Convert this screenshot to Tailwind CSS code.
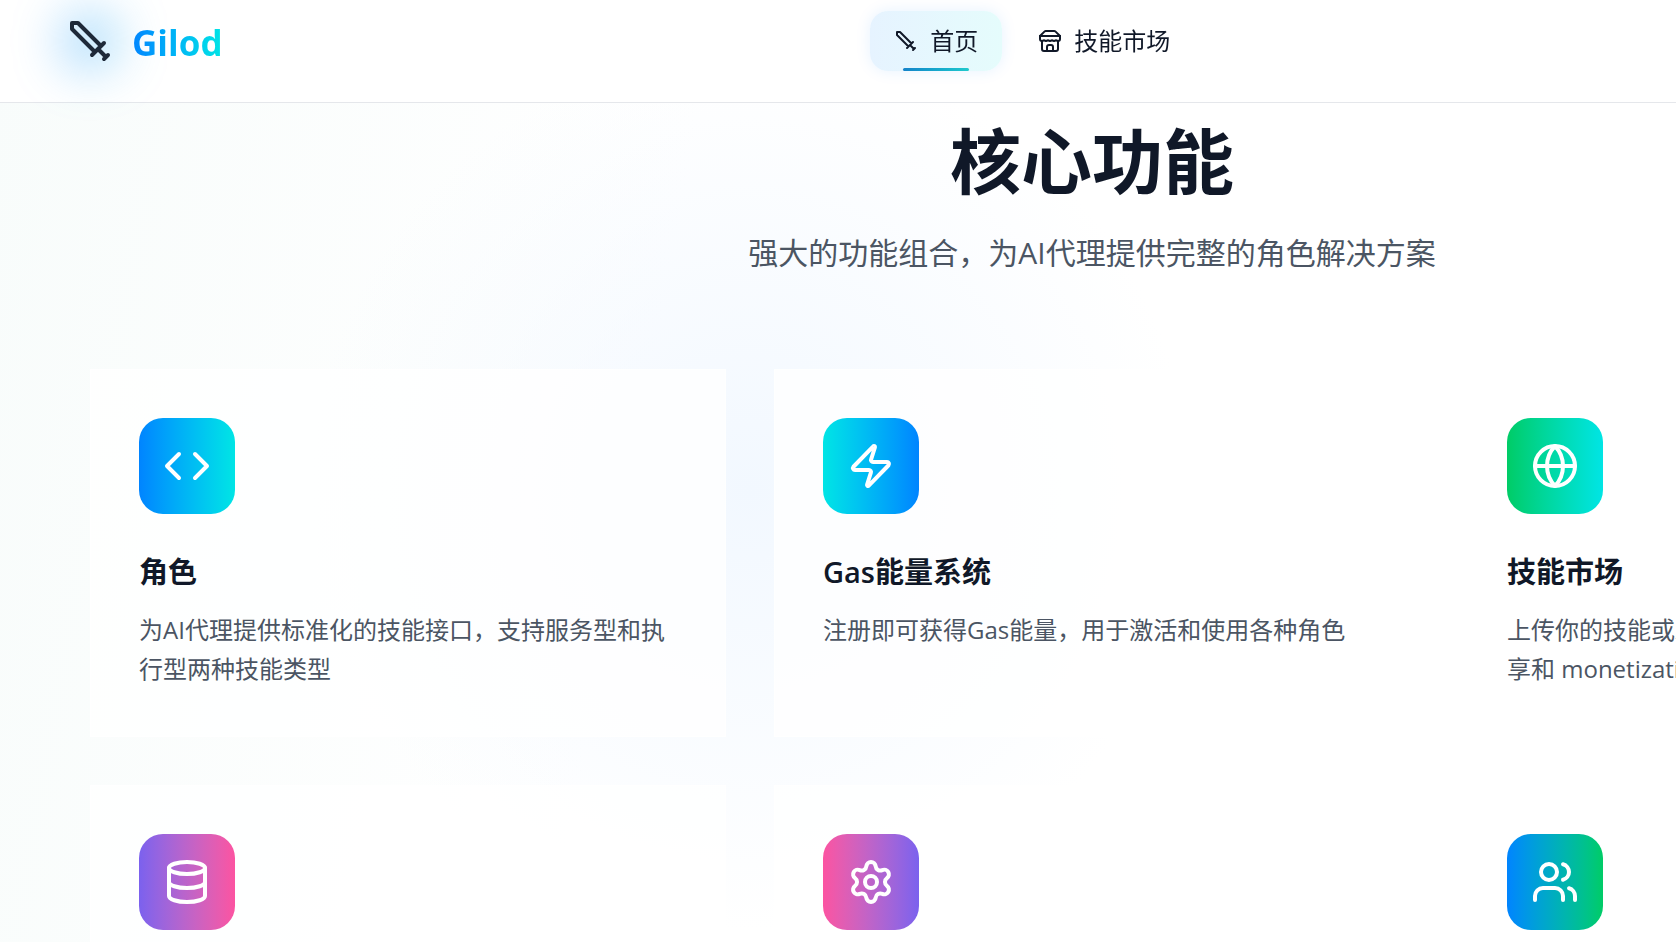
<!DOCTYPE html>
<html lang="zh-CN">
<head>
    <meta charset="UTF-8">
    <meta name="viewport" content="width=device-width, initial-scale=1.0">
    <title>Gilod</title>
    <script src="https://cdn.jsdelivr.net/npm/@tailwindcss/browser@4"></script>
</head>
<body class="overflow-x-hidden bg-white font-['Open_Sans','Noto_Sans_CJK_SC',sans-serif] text-gray-900">
    <!-- Shared icon shapes -->
    <svg class="hidden">
        <symbol id="sword" viewBox="0 0 24 24">
            <path d="M14.5 17.5 3 6V3h3l11.5 11.5M13 19l6-6M16 16l4 4M19 21l2-2"/>
        </symbol>
    </svg>

    <div class="min-h-screen min-w-[2184px] bg-[radial-gradient(circle_440px_at_750px_490px,#f2f8ff,transparent),linear-gradient(100deg,#f8fcfb,#ffffff_30%)]">
        <!-- Header -->
        <header class="sticky top-0 z-10 border-b border-gray-200 bg-white/90">
            <div class="flex h-[102px] items-start justify-between px-[66px] pt-[11px]">
                <a href="#" class="flex h-15 items-center gap-[18px]">
                    <span class="relative">
                        <span class="absolute -inset-2 rounded-full bg-linear-to-r from-[#0084ff]/30 to-[#1aa8e8]/30 blur-xl"></span>
                        <svg class="relative size-12 fill-none stroke-gray-800 stroke-2" stroke-linecap="round" stroke-linejoin="round"><use href="#sword"/></svg>
                    </span>
                    <span class="bg-linear-to-r from-[#0084ff] to-[#00e5e5] bg-clip-text pt-1 text-[35px] leading-10 font-bold text-transparent">Gilod</span>
                </a>
                <nav class="flex gap-3 text-2xl leading-9">
                    <a href="#" class="relative flex items-center gap-3 rounded-[18px] bg-linear-to-r from-[#e6f3ff] to-[#e5fcfc] px-6 py-3 shadow-[0_0_15px_#0084ff1a]">
                        <svg class="size-6 fill-none stroke-current stroke-2" stroke-linecap="round" stroke-linejoin="round"><use href="#sword"/></svg>
                        首页
                        <span class="absolute bottom-0 left-1/4 h-[3px] w-1/2 rounded-full bg-linear-to-r from-[#1683c9] to-[#20c9cc]"></span>
                    </a>
                    <a href="#" class="flex items-center gap-3 px-6 py-3">
                        <svg class="size-6 fill-none stroke-current stroke-2" viewBox="0 0 24 24" stroke-linecap="round" stroke-linejoin="round">
                            <path d="m2 7 4.41-4.41A2 2 0 0 1 7.83 2h8.34a2 2 0 0 1 1.42.59L22 7"/>
                            <path d="M4 12v8a2 2 0 0 0 2 2h12a2 2 0 0 0 2-2v-8"/>
                            <path d="M15 22v-4a2 2 0 0 0-2-2h-2a2 2 0 0 0-2 2v4"/>
                            <path d="M2 7h20"/>
                            <path d="M22 7v3a2 2 0 0 1-2 2 2.7 2.7 0 0 1-1.59-.63.7.7 0 0 0-.82 0A2.7 2.7 0 0 1 16 12a2.7 2.7 0 0 1-1.59-.63.7.7 0 0 0-.82 0A2.7 2.7 0 0 1 12 12a2.7 2.7 0 0 1-1.59-.63.7.7 0 0 0-.82 0A2.7 2.7 0 0 1 8 12a2.7 2.7 0 0 1-1.59-.63.7.7 0 0 0-.82 0A2.7 2.7 0 0 1 4 12a2 2 0 0 1-2-2V7"/>
                        </svg>
                        技能市场
                    </a>
                </nav>
                <div class="w-[276px]"></div>
            </div>
        </header>

        <!-- Core features -->
        <main class="px-[90px] pt-[22px] pb-12">
            <div class="mb-[92px] text-center">
                <h2 class="mb-8 text-[71px] leading-[72px] font-bold">核心功能</h2>
                <p class="text-3xl leading-[48px] text-[#4b5563]">强大的功能组合，为AI代理提供完整的角色解决方案</p>
            </div>

            <div class="grid grid-cols-3 gap-12">
                <section class="min-h-[368px] border border-white/50 bg-white/80 p-12">
                    <div class="mb-9 flex size-24 items-center justify-center rounded-3xl bg-linear-to-r from-[#0084ff] to-[#00e5e5]">
                        <svg class="size-12 fill-none stroke-white stroke-2" viewBox="0 0 24 24" stroke-linecap="round" stroke-linejoin="round">
                            <path d="m16 18 6-6-6-6M8 6l-6 6 6 6"/>
                        </svg>
                    </div>
                    <h3 class="mb-4 text-[29px] leading-[44px] font-semibold">角色</h3>
                    <p class="text-2xl leading-[39px] text-[#4b5563]">为AI代理提供标准化的技能接口，支持服务型和执行型两种技能类型</p>
                </section>

                <section class="min-h-[368px] border border-white/50 bg-white/80 p-12">
                    <div class="mb-9 flex size-24 items-center justify-center rounded-3xl bg-linear-to-r from-[#00e5e5] to-[#0084ff]">
                        <svg class="size-12 fill-none stroke-white stroke-2" viewBox="0 0 24 24" stroke-linecap="round" stroke-linejoin="round">
                            <path d="M4 14a1 1 0 0 1-.78-1.63l9.9-10.2a.5.5 0 0 1 .86.46l-1.92 6.02A1 1 0 0 0 13 10h7a1 1 0 0 1 .78 1.63l-9.9 10.2a.5.5 0 0 1-.86-.46l1.92-6.02A1 1 0 0 0 11 14z"/>
                        </svg>
                    </div>
                    <h3 class="mb-4 text-[29px] leading-[44px] font-semibold">Gas能量系统</h3>
                    <p class="text-2xl leading-[39px] text-[#4b5563]">注册即可获得Gas能量，用于激活和使用各种角色</p>
                </section>

                <section class="min-h-[368px] border border-white/50 bg-white/80 p-12">
                    <div class="mb-9 flex size-24 items-center justify-center rounded-3xl bg-linear-to-r from-[#00cc66] to-[#00e5e5]">
                        <svg class="size-12 fill-none stroke-white stroke-2" viewBox="0 0 24 24" stroke-linecap="round" stroke-linejoin="round">
                            <circle cx="12" cy="12" r="10"/>
                            <path d="M12 2a14.5 14.5 0 0 0 0 20 14.5 14.5 0 0 0 0-20M2 12h20"/>
                        </svg>
                    </div>
                    <h3 class="mb-4 text-[29px] leading-[44px] font-semibold">技能市场</h3>
                    <p class="text-2xl leading-[39px] text-[#4b5563]">上传你的技能或发现他人的优秀作品，支持作品共享和 monetization</p>
                </section>

                <section class="min-h-[368px] border border-white/50 bg-white/80 p-12">
                    <div class="flex size-24 items-center justify-center rounded-3xl bg-linear-to-r from-[#7b61ee] to-[#fc53a1]">
                        <svg class="size-12 fill-none stroke-white stroke-2" viewBox="0 0 24 24" stroke-linecap="round" stroke-linejoin="round">
                            <ellipse cx="12" cy="5" rx="9" ry="3"/>
                            <path d="M3 5v14a9 3 0 0 0 18 0V5M3 12a9 3 0 0 0 18 0"/>
                        </svg>
                    </div>
                </section>

                <section class="min-h-[368px] border border-white/50 bg-white/80 p-12">
                    <div class="flex size-24 items-center justify-center rounded-3xl bg-linear-to-r from-[#fc53a1] to-[#7b61ee]">
                        <svg class="size-12 fill-none stroke-white stroke-2" viewBox="0 0 24 24" stroke-linecap="round" stroke-linejoin="round">
                            <path d="M9.671 4.136a2.34 2.34 0 0 1 4.659 0 2.34 2.34 0 0 0 3.319 1.915 2.34 2.34 0 0 1 2.33 4.033 2.34 2.34 0 0 0 0 3.831 2.34 2.34 0 0 1-2.33 4.033 2.34 2.34 0 0 0-3.319 1.915 2.34 2.34 0 0 1-4.659 0 2.34 2.34 0 0 0-3.32-1.915 2.34 2.34 0 0 1-2.33-4.033 2.34 2.34 0 0 0 0-3.831A2.34 2.34 0 0 1 6.35 6.051a2.34 2.34 0 0 0 3.319-1.915"/>
                            <circle cx="12" cy="12" r="3"/>
                        </svg>
                    </div>
                </section>

                <section class="min-h-[368px] border border-white/50 bg-white/80 p-12">
                    <div class="flex size-24 items-center justify-center rounded-3xl bg-linear-to-r from-[#0084ff] to-[#00cc66]">
                        <svg class="size-12 fill-none stroke-white stroke-2" viewBox="0 0 24 24" stroke-linecap="round" stroke-linejoin="round">
                            <path d="M16 21v-2a4 4 0 0 0-4-4H6a4 4 0 0 0-4 4v2M16 3.128a4 4 0 0 1 0 7.744M22 21v-2a4 4 0 0 0-3-3.87"/>
                            <circle cx="9" cy="7" r="4"/>
                        </svg>
                    </div>
                </section>
            </div>
        </main>
    </div>
</body>
</html>
